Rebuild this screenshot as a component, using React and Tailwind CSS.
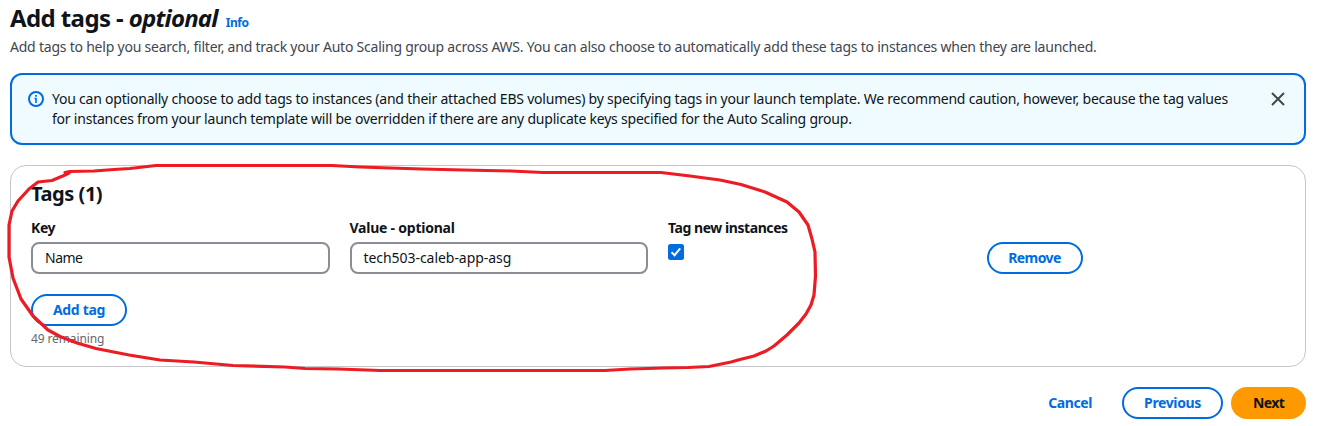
const outlineButton =
  "flex h-8 items-center justify-center rounded-[20px] border-2 border-[#006ce0] pb-px text-[14px] font-bold text-[#006ce0]";

function Field({ label, value, labelClass, valueClass }) {
  return (
    <div className="flex flex-col gap-1">
      <label className={`h-5 text-[14px] leading-5 font-bold whitespace-nowrap ${labelClass}`}>
        <span>{label}</span>
      </label>
      <div className="flex h-8 items-center rounded-lg border-2 border-[#8c8c94] bg-white px-3 text-[14px] leading-5">
        <span className={valueClass}>{value}</span>
      </div>
    </div>
  );
}

function InfoIcon() {
  return (
    <svg className="mt-0.5 h-4 w-4 shrink-0" viewBox="0 0 16 16" fill="none" stroke="#006ce0" strokeWidth="2">
      <circle cx="8" cy="8" r="7" />
      <path d="M8 12V7M6.500 7.500H8.500" strokeWidth="1.600" />
      <path d="M8 5.800V4" strokeWidth="1.800" />
    </svg>
  );
}

function Annotation() {
  return (
    <svg
      className="pointer-events-none absolute top-0 left-0"
      width="1317"
      height="426"
      viewBox="0 0 1317 426"
      fill="none"
      stroke="#ed1c24"
      strokeWidth="3.2"
      strokeLinejoin="round"
      strokeLinecap="round"
    >
      <path d="M65 172.5L70 171.5L94 171L114 169.5L130 168.5L156 165.5H332L360 167L390 168L422 169L463 170L511 171L543 172.5L661 172.5L690 176L720 180L741 184.500L765 192L787 202L799 212L808 225L812 239L815 252L815.500 276L814 295L811 305L806 314L799 323L787 335L774 346L766 351L754 356L740 359.500L731 362L709 366.500L688 367.500L663 368L648 368.500L630 369L605 370.500H380L338 369L305 368.500L285 367L233 365.500L194 362L160 360L129 355L96 348.500L77 343L60 336.500L48 330L33 316L21 299L13 278L9 257L9 225L12 211L18 201L29 189L38 182L52 180.500L65 175L69 173" />
    </svg>
  );
}

export default function App() {
  return (
    <div className="relative h-[426px] w-[1317px] overflow-hidden bg-white pt-[3px] pr-[11px] pl-[10px] font-['Noto_Sans',sans-serif] text-[#0f141a]">
      <header className="flex h-[54px] flex-col gap-1">
        <div className="flex h-[30px] items-baseline gap-2 whitespace-nowrap">
          <h1 className="text-[24px] leading-[30px] font-bold tracking-[-0.6px]">
            Add tags - <em className="tracking-[-0.8px]">optional</em>
          </h1>
          <a className="text-[12px] leading-4 font-bold tracking-[-0.4px] text-[#006ce0]">Info</a>
        </div>
        <p className="text-[14px] leading-5 tracking-[-0.222px] whitespace-nowrap text-[#424650]">
          <span>Add tags to help you search, filter, and track your Auto Scaling group across AWS. You can also choose to automatically add these tags to instances when they are launched.</span>
        </p>
      </header>

      <section className="mt-4 flex h-[72px] items-start rounded-xl border-2 border-[#006ce0] bg-[#f0fbff] px-4 py-[14px]">
        <InfoIcon />
        <p className="ml-2 flex-1 text-[14px] leading-5 tracking-[-0.22px] whitespace-nowrap">
          <span>You can optionally choose to add tags to instances (and their attached EBS volumes) by specifying tags in your launch template. We recommend caution, however, because the tag values</span>
          <br />
          <span>for instances from your launch template will be overridden if there are any duplicate keys specified for the Auto Scaling group.</span>
        </p>
        <svg className="mt-0.5 mr-0.5 h-4 w-4 shrink-0" viewBox="0 0 16 16" fill="none" stroke="#424650" strokeWidth="2">
          <path d="M2 2L14 14M14 2L2 14" />
        </svg>
      </section>

      <section className="mt-5 h-[202px] rounded-2xl border border-[#c6c6cd] px-5 pt-4">
        <h2 className="h-6 text-[20px] leading-6 font-bold tracking-[-0.45px]"><span>Tags (1)</span></h2>
        <div className="mt-3 grid grid-cols-4 gap-5">
          <Field label="Key" value="Name" labelClass="tracking-[-0.4px]" valueClass="tracking-[-0.5px]" />
          <Field label="Value - optional" value="tech503-caleb-app-asg" labelClass="tracking-[-0.23px]" valueClass="tracking-[-0.05px]" />
          <div className="flex flex-col items-start gap-1.5">
            <label className="h-5 text-[14px] leading-5 font-bold tracking-[-0.44px]"><span>Tag new instances</span></label>
            <svg className="h-4 w-4" viewBox="0 0 16 16" fill="none">
              <rect width="16" height="16" rx="2.500" fill="#006ce0" />
              <path d="M3.500 8.300L6.600 11.200L12.200 4.300" stroke="white" strokeWidth="2" />
            </svg>
          </div>
          <div className="flex items-end">
            <button className={`${outlineButton} w-24 tracking-[-0.6px]`}><span>Remove</span></button>
          </div>
        </div>
        <button className={`${outlineButton} mt-5 w-24 tracking-[-0.3px]`}><span>Add tag</span></button>
        <p className="mt-[5px] text-[12px] leading-4 tracking-[-0.12px] text-[#656871]"><span>49 remaining</span></p>
      </section>

      <footer className="mt-5 flex h-8 items-center justify-end">
        <button className="mr-[30px] pb-px text-[14px] font-bold tracking-[-0.4px] text-[#006ce0]"><span>Cancel</span></button>
        <button className={`${outlineButton} mr-2 w-[101px] tracking-[-0.38px]`}><span>Previous</span></button>
        <button className="h-8 w-[75px] rounded-[20px] bg-[#ff9900] pb-px text-[14px] font-bold tracking-[-0.6px]"><span>Next</span></button>
      </footer>

      <Annotation />
    </div>
  );
}
